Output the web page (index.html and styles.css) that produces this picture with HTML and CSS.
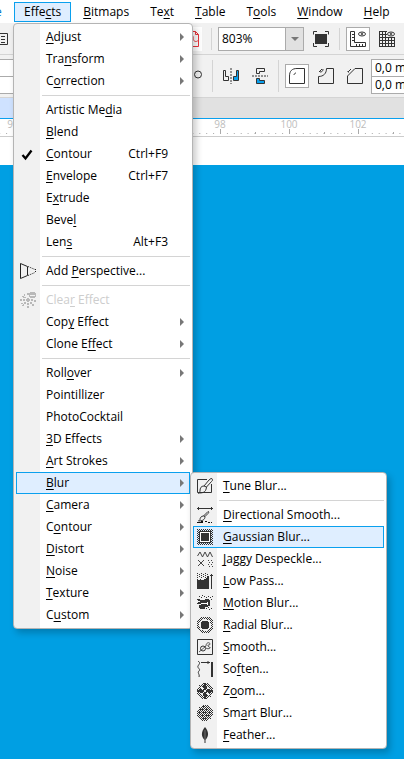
FILE: index.html
```html
<!DOCTYPE html>
<html lang="en">
<head>
<meta charset="utf-8">
<meta name="viewport" content="width=device-width, initial-scale=1">
<title>Effects menu</title>
<link rel="stylesheet" href="styles.css">
</head>
<body>
<svg class="defs" aria-hidden="true">
  <defs>
    <pattern id="dither" width="2" height="2" patternUnits="userSpaceOnUse"><path d="M0 0h1v1H0zM1 1h1v1H1z" fill="#333"/></pattern>
    <pattern id="sparse" width="4" height="2" patternUnits="userSpaceOnUse"><path d="M0 0h1v1H0zM2 1h1v1H2z" fill="#333"/></pattern>
  </defs>
</svg>
<div class="app">
  <nav class="menubar" aria-label="Main menu">
    <button class="title previous">e</button>
    <div class="open">
      <button class="title active" aria-expanded="true">Effe<u>c</u>ts</button>
      <ul class="menu effects">
        <li><button class="item"><span><u>A</u>djust</span><i class="arrow"></i></button></li>
        <li><button class="item"><span>Tra<u>n</u>sform</span><i class="arrow"></i></button></li>
        <li><button class="item"><span>C<u>o</u>rrection</span><i class="arrow"></i></button></li>
        <li class="rule"></li>
        <li><button class="item"><span>Artistic Me<u>d</u>ia</span></button></li>
        <li><button class="item"><span><u>B</u>lend</span></button></li>
        <li><button class="item"><svg class="icon" viewBox="0 0 16 16"><path d="M2.500 9l3 3.500 6-8" fill="none" stroke="#000" stroke-width="2.300"/></svg><span><u>C</u>ontour</span><kbd>Ctrl+F9</kbd></button></li>
        <li><button class="item"><span><u>E</u>nvelope</span><kbd>Ctrl+F7</kbd></button></li>
        <li><button class="item"><span>E<u>x</u>trude</span></button></li>
        <li><button class="item"><span>Beve<u>l</u></span></button></li>
        <li><button class="item"><span>Len<u>s</u></span><kbd>Alt+F3</kbd></button></li>
        <li class="rule"></li>
        <li><button class="item"><svg class="icon" viewBox="0 0 16 16"><path d="M.5.500l7 3v9l-7 3z" fill="none" stroke="#222"/><path d="M8 3.500l7 3M8 12.500l7-3M15.500 6v4" fill="none" stroke="#222" stroke-dasharray="1 1"/></svg><span>Add <u>P</u>erspective...</span></button></li>
        <li class="rule"></li>
        <li><button class="item" disabled><svg class="icon crisp" viewBox="0 0 16 16"><path fill="#b8b8b8" d="M7 6h2v1h1v2H9v1H7V9H6V7h1zM7 1h2v2H7zM4 2h1v2H4zM2 4h2v1h1v1H3V5H2zM0 7h2v2H0zM3 7h2v2H3zM1 11h2v1H1zM4 10h2v2H4zM3 12h1v2H2v-1h1zM7 11h2v2H7zM7 14h2v2H7zM10 10h2v2h-2zM12 12h2v2h-2zM11 7h2v2h-2zM14 8h2v2h-2zM5 5h1v1H5zM10 0h5v1h1v4h-1v1h-5V5H9V1h1z"/><path fill="#f1f1f1" d="M10 3h5v1h-5z"/></svg><span>Clea<u>r</u> Effect</span></button></li>
        <li><button class="item"><span>Cop<u>y</u> Effect</span><i class="arrow"></i></button></li>
        <li><button class="item"><span>Clone E<u>f</u>fect</span><i class="arrow"></i></button></li>
        <li class="rule"></li>
        <li><button class="item"><span>Roll<u>o</u>ver</span><i class="arrow"></i></button></li>
        <li><button class="item"><span>Pointillizer</span></button></li>
        <li><button class="item"><span>PhotoCocktail</span></button></li>
        <li><button class="item"><span><u>3</u>D Effects</span><i class="arrow"></i></button></li>
        <li><button class="item"><span><u>A</u>rt Strokes</span><i class="arrow"></i></button></li>
        <li class="parent"><button class="item hot" aria-expanded="true"><span><u>B</u>lur</span><i class="arrow"></i></button>
          <ul class="menu blur">
            <li><button class="item"><svg class="icon" viewBox="0 0 16 16" fill="none" stroke="#333"><path d="M10 1.500H.5v13h14V6"/><path d="M14 .5c2 0 2 2 .5 3L9.500 9 7 8l5-6zM7 8c-3 0-4 2-4 5 0 1-1 2-2 2 4 0 8 0 8.500-6" /></svg><span><u>T</u>une Blur...</span></button></li>
            <li class="rule"></li>
            <li><button class="item"><svg class="icon" viewBox="0 0 16 16" fill="none" stroke="#333"><path d="M0 1.500h16M1.500 0v3M14.500 0v3"/><path d="M11 4.500c1 0 1 1 0 2L8 9.500 6.500 9zM6.500 9C4 9 3 11 3 12.500L1.500 14C5 14 8 13 8 9.500"/><path d="M0 15.500h6M8 14.500h2M11 15.500h2M14 15.500h1M4 14.500h2" stroke="#111"/></svg><span><u>D</u>irectional Smooth...</span></button></li>
            <li><button class="item hot"><svg class="icon crisp" viewBox="0 0 16 16"><path fill="url(#dither)" d="M0 0h16v16H0z"/><path fill="#333" d="M2 2h12v12H2z"/><path fill="#fff" d="M3 3h10v10H3z"/><path fill="#333" d="M4 4h8v8H4z"/></svg><span><u>G</u>aussian Blur...</span></button></li>
            <li><button class="item"><svg class="icon" viewBox="0 0 16 16" fill="none" stroke="#444"><path d="M.5 5L3 1l2.500 5L8 1l2.500 5L13 1l2.500 5M1 9l6 6M7 9l-6 6"/><path d="M11 9.500h5M12 11.500h4M11 13.500h5M12 15.500h4" stroke-dasharray="1 2"/></svg><span><u>J</u>aggy Despeckle...</span></button></li>
            <li><button class="item"><svg class="icon crisp" viewBox="0 0 16 16"><path fill="url(#sparse)" d="M0 0h11v5H0z"/><path fill="#333" d="M0 6h1v1h2V6h1v1h3V6h2V5h1V4h1V3h1v13H0zM14 1h1v15h-1zM13 2h3v1h-3z"/></svg><span><u>L</u>ow Pass...</span></button></li>
            <li><button class="item"><svg class="icon crisp" viewBox="0 0 16 16"><path fill="#333" d="M2 1h1v1H2zM5 0h1v1H5zM4 2h1v1H4zM7 1h1v1H7zM9 2h1v1H9zM11 1h1v1h-1zM13 2h1v1h-1zM15 1h1v1h-1zM14 4h1v1h-1zM9 13h1v1H9zM11 12h1v1h-1zM12 14h1v1h-1zM14 13h1v1h-1zM0 4h1v1H0zM0 8h1v1H0z"/><path fill="#333" d="M1 4h2v1h5V4h4v1h1v6h-2v1H8v2H3v-1H2v-3h2V9H1V7h2V6H1z"/><path fill="#fff" d="M4 8h6V7h1v3h-1V9H4z"/></svg><span><u>M</u>otion Blur...</span></button></li>
            <li><button class="item"><svg class="icon crisp" viewBox="0 0 16 16"><path fill="url(#dither)" d="M4 0h8l4 4v8l-4 4H4l-4-4V4z"/><circle cx="8" cy="8" r="6" fill="#f1f1f1"/><circle cx="8" cy="8" r="4.500" fill="#333"/></svg><span><u>R</u>adial Blur...</span></button></li>
            <li><button class="item"><svg class="icon" viewBox="0 0 16 16" fill="none" stroke="#333"><path d="M.5.500h15v15H.5z"/><circle cx="6" cy="9.500" r="2.500"/><path d="M2 13l7-6M9 7c0-4 4-4 4-2s-3 0-2 2 3 1 2 2-3 1-4 0" stroke-width=".8"/></svg><span><u>S</u>mooth...</span></button></li>
            <li><button class="item"><svg class="icon" viewBox="0 0 16 16" fill="none" stroke="#333"><path d="M1 0c3 2 1 3 0 5s3 3 1 5 1 3 0 6"/><path d="M4 1.500h9M11 0v3"/><path d="M15 1v15" stroke-width="2"/></svg><span>So<u>f</u>ten...</span></button></li>
            <li><button class="item"><svg class="icon crisp" viewBox="0 0 16 16"><circle cx="8" cy="8" r="8" fill="url(#dither)"/><path fill="#333" d="M7 0h2v3h1v2H9v2H7V5H6V3h1zM7 9h2v2h1v2H9v3H7v-3H6v-2h1zM0 7h3V6h2v1h2v2H5v1H3V9H0zM9 7h2V6h2v1h3v2h-3v1h-2V9H9z"/><path fill="#f1f1f1" d="M7 7h2v2H7zM4 4h2v2H4zM10 4h2v2h-2zM4 10h2v2H4zM10 10h2v2h-2z"/></svg><span>Z<u>o</u>om...</span></button></li>
            <li><button class="item"><svg class="icon crisp" viewBox="0 0 16 16"><circle cx="8" cy="8" r="8" fill="url(#dither)"/><path fill="#333" d="M5 1h3v1H5zM3 4h3v1H3zM9 4h2v1H9zM2 7h2v1H2zM6 7h3v1H6zM11 7h3v1h-3zM4 10h3v1H4zM9 10h3v1H9zM6 13h4v1H6z"/></svg><span>Sm<u>a</u>rt Blur...</span></button></li>
            <li><button class="item"><svg class="icon" viewBox="0 0 16 16"><path fill="#333" d="M8 0c4 5 4 9 .5 13v3h-1v-3C4 9 4 5 8 0z"/><path d="M8 3v10" stroke="#999" stroke-width=".6"/></svg><span><u>F</u>eather...</span></button></li>
          </ul>
        </li>
        <li><button class="item"><span><u>C</u>amera</span><i class="arrow"></i></button></li>
        <li><button class="item"><span>C<u>o</u>ntour</span><i class="arrow"></i></button></li>
        <li><button class="item"><span><u>D</u>istort</span><i class="arrow"></i></button></li>
        <li><button class="item"><span><u>N</u>oise</span><i class="arrow"></i></button></li>
        <li><button class="item"><span><u>T</u>exture</span><i class="arrow"></i></button></li>
        <li><button class="item"><span>C<u>u</u>stom</span><i class="arrow"></i></button></li>
      </ul>
    </div>
    <button class="title"><u>B</u>itmaps</button>
    <button class="title">Te<u>x</u>t</button>
    <button class="title"><u>T</u>able</button>
    <button class="title">T<u>o</u>ols</button>
    <button class="title"><u>W</u>indow</button>
    <button class="title"><u>H</u>elp</button>
  </nav>

  <div class="toolbar standard">
    <div class="start">
      <button class="tool" aria-label="Document"><svg class="glyph" viewBox="0 0 16 16" fill="none" stroke="#333"><path d="M0 2.500h15.500v11H0M9 5.500h4M9 8.500h4M9 11.500h4"/></svg></button>
      <button class="tool pdf" aria-label="Publish to PDF"><svg class="glyph" viewBox="0 0 16 16" fill="none" stroke="#e8343c"><path d="M3.500.500h6l3 3v12h-9zM9.500.500v3h3"/><path d="M2 9.500c4 1 6-1 5-4s-2 0 0 3 4 2 5 1"/></svg></button>
    </div>
    <span class="divider"></span>
    <label class="zoom"><select aria-label="Zoom level"><option>803%</option></select><i class="down"></i></label>
    <button class="tool" aria-label="Full screen"><svg class="glyph" viewBox="0 0 16 16"><path fill="#333" d="M2 3h12v10H2z"/><path fill="none" stroke="#333" d="M.5 3.500v-3H4M12 .5h3.500v3M15.500 12v3.500H12M4 15.500H.5V12"/></svg></button>
    <span class="divider"></span>
    <button class="tool on" aria-label="Show rulers"><svg class="glyph" viewBox="0 0 16 16" fill="none" stroke="#333"><path d="M.5.500h4v11h11v4H.5zM2 3.500h2M2 6.500h2M2 9.500h2M6.500 13v2M9.500 13v2M12.500 13v2"/><ellipse cx="12" cy="3" rx="3.500" ry="2"/><circle cx="12" cy="3" r=".8"/></svg></button>
    <button class="tool" aria-label="Show grid"><svg class="glyph" viewBox="0 0 16 16" fill="none" stroke="#333"><path d="M.5 0v16M3.500 0v16M6.500 0v16M9.500 6v10M12.500 6v10M15.500 6v10M0 .5h8M0 3.500h8M0 6.500h16M0 9.500h16M0 12.500h16M0 15.500h16"/><ellipse cx="12" cy="3" rx="3.500" ry="2"/><circle cx="12" cy="3" r=".8"/></svg></button>
  </div>

  <div class="toolbar property">
    <div class="start">
      <span class="pair left"><input aria-label="Width" value=""><input aria-label="Height" value=""></span>
      <svg class="degree" viewBox="0 0 10 10"><circle cx="6" cy="3.500" r="3.500" fill="none" stroke="#333"/></svg>
    </div>
    <span class="divider tall"></span>
    <button class="tool" aria-label="Mirror horizontally"><svg class="glyph" viewBox="0 0 16 16" fill="none" stroke="#333"><path d="M.5 2.500h2v6h3v4h-5z"/><path d="M15.500 2.500h-2v6h-3v4h5z" fill="#0aa0ee"/><path d="M8 0v16" stroke-dasharray="2 1"/></svg></button>
    <button class="tool" aria-label="Mirror vertically"><svg class="glyph" viewBox="0 0 16 16" fill="none" stroke="#333"><path d="M4.500.500h8v3h-5v2h-3z"/><path d="M4.500 10.500h3v2h5v3h-8z" fill="#0aa0ee"/><path d="M0 8h16" stroke-dasharray="2 1"/></svg></button>
    <span class="divider tall"></span>
    <button class="tool on" aria-label="Round corner"><svg class="glyph" viewBox="0 0 16 16" fill="none" stroke="#333"><path d="M.5 15.500V8C.5 3 3 .5 8 .5h7.500v15z"/><path d="M5 7c0-1 1-2 2-2"/></svg></button>
    <button class="tool" aria-label="Scalloped corner"><svg class="glyph" viewBox="0 0 16 16" fill="none" stroke="#333"><path d="M.5 15.500v-7c5 0 8-3 8-8h7v15z"/><path d="M1 4l3-3M2 4c2 0 3-1 3-3"/></svg></button>
    <button class="tool" aria-label="Chamfered corner"><svg class="glyph" viewBox="0 0 16 16" fill="none" stroke="#333"><path d="M.5 15.500V8L8 .500h7.500v15z"/><path d="M1 4l3-3M1 3v1h1"/></svg></button>
    <span class="pair corner"><input aria-label="Corner radius top" value="0,0 mm"><input aria-label="Corner radius bottom" value="0,0 mm"></span>
  </div>

  <div class="tabs"><button class="tab" aria-label="Document tab"></button></div>
  <svg class="ruler" aria-hidden="true">
    <defs><pattern id="minor" x="13" width="6.900" height="18" patternUnits="userSpaceOnUse"><path d="M0 14h1v1H0z" fill="#aaa"/></pattern>
    <pattern id="half" x="47" width="69" height="18" patternUnits="userSpaceOnUse"><path d="M1 13h1v2H1z" fill="#aaa"/></pattern>
    <pattern id="major" x="13" width="69" height="18" patternUnits="userSpaceOnUse"><path d="M0 10h1v5H0z" fill="#aaa"/></pattern></defs>
    <rect width="100%" height="18" fill="url(#minor)"/><rect width="100%" height="18" fill="url(#half)"/><rect width="100%" height="18" fill="url(#major)"/>
    <text x="13" y="9">92</text><text x="220" y="9">98</text><text x="289" y="9">100</text><text x="358" y="9">102</text>
  </svg>
  <main class="page"><div class="artwork"></div></main>
</div>
</body>
</html>
```
FILE: styles.css
```css
* { box-sizing: border-box; }
body { margin: 0; font: 12px/16px "Open Sans", "Noto Sans", sans-serif; color: #000; background: #fff; }
button, input, select { font: inherit; color: inherit; border: 0; padding: 0; margin: 0; background: none; }
ul { list-style: none; margin: 0; padding: 0; }
u { text-decoration: underline; text-decoration-thickness: 1px; text-underline-offset: 2px; }
.defs { position: absolute; width: 0; height: 0; }
.app { display: flex; flex-direction: column; min-height: 100vh; overflow: hidden; }

.menubar { display: flex; align-items: center; height: 23px; padding-top: 1px; background: #fff; }
.title { flex: none; height: 20px; padding: 0 10px 0 9px; border: 1px solid transparent; white-space: nowrap; }
.title.previous { width: 14px; padding: 0; color: #0078c8; text-align: left; text-indent: -6px; }
.title.active { padding: 0 9px; background: #dfeeff; border-color: #0aa0ee; }
.open { position: relative; display: flex; flex: none; margin-right: 2px; }

.menu { position: absolute; z-index: 2; padding: 2px; border: 1px solid #b4b4b4; border-radius: 4px; background: linear-gradient(90deg, #f1f1f1 26px, #fff 26px); box-shadow: 3px 4px 7px rgba(0, 0, 0, .22); }
.effects { top: 21px; left: -1px; width: 180px; }
.blur { top: 0; left: 100%; width: 197px; z-index: 3; }
.parent { position: relative; }
.item { display: flex; align-items: center; position: relative; width: 100%; height: 22px; padding: 0 5px 0 29px; border: 1px solid transparent; text-align: left; white-space: nowrap; }
.item span { flex: 1; }
.item:disabled { color: #cdcdcd; }
.item.hot { background: #dfeeff; border-color: #0aa0ee; }
.item kbd { font: inherit; padding-right: 16px; }
.icon { width: 16px; height: 16px; flex: none; margin: 0 10px 0 -26px; }
.crisp { shape-rendering: crispEdges; }
.arrow { width: 0; height: 0; border: 4px solid transparent; border-left-color: #777; border-right: 0; }
.rule { height: 7px; padding: 3px 0 3px 26px; }
.rule::after { content: ""; display: block; height: 1px; background: #d4d4d4; }

.toolbar { display: flex; align-items: center; background: #f1f1f1; border-bottom: 1px solid #d4d4d4; white-space: nowrap; }
.standard { height: 32px; }
.property { height: 43px; }
.start { display: flex; align-items: center; justify-content: space-between; flex: none; width: 202px; }
.standard .start .tool { width: 16px; }
.standard .start .tool:first-child { margin-left: -8px; }
.divider { flex: none; width: 1px; height: 22px; margin-left: 9px; background: #d4d4d4; }
.tall { height: 32px; margin-left: 10px; }
.tool { display: grid; place-items: center; flex: none; width: 24px; height: 24px; }
.tool.on { background: #fff; border: 1px solid #ababab; }
.glyph { width: 16px; height: 16px; }
.pdf { background: #fff; }
.zoom { display: flex; align-items: center; flex: none; width: 86px; height: 24px; margin: 0 5px 0 6px; border: 1px solid #ababab; background: #fff; }
.zoom select { flex: 1; min-width: 0; height: 22px; padding-left: 3px; appearance: none; outline: 0; }
.down { display: grid; place-items: center; width: 18px; height: 22px; border-left: 1px solid #ababab; background: #e1e1e1; }
.down::after { content: ""; border: 4px solid transparent; border-top-color: #777; border-bottom: 0; }
.standard .divider ~ .divider { margin: 0 6px; }
.standard .on { margin-right: 5px; }
.pair { display: grid; grid-template-rows: 17px 16px; flex: none; border: 1px solid #ababab; background: #fff; }
.pair input { min-width: 0; width: 100%; padding-left: 3px; outline: 0; }
.pair input:first-child { border-bottom: 1px solid #ababab; }
.left { width: 20px; margin-left: -6px; }
.degree { width: 10px; height: 10px; overflow: visible; }
.property .tall + .tool { margin-left: 6px; }
.property .tool + .tool { margin-left: 5px; }
.property .tool + .tall { margin-left: 6px; }
.corner { width: 60px; margin-left: 4px; }

.tabs { display: flex; height: 21px; background: #e1e1e1; border-bottom: 1px solid #0aa0ee; }
.tab { width: 150px; background: #cfe2ff; }
.ruler { display: block; width: 100%; height: 18px; overflow: visible; border-bottom: 1px solid #ccc; background: #fff; }
.ruler text { font-size: 10px; fill: #bdbdbd; text-anchor: middle; }
.page { display: flex; flex: 1; padding-top: 28px; background: #fff; }
.artwork { flex: 1; background: #009fe3; }
```
